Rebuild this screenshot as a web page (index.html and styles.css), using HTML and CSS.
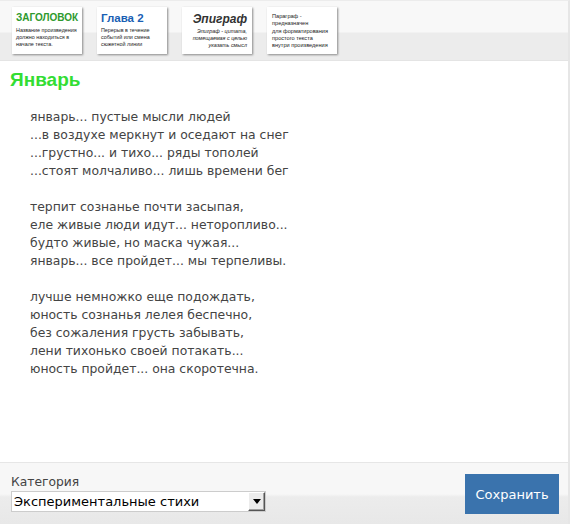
FILE: index.html
```html
<!DOCTYPE html>
<html lang="ru">
<head>
<meta charset="utf-8">
<link rel="stylesheet" href="styles.css">
</head>
<body>
<div class="page">
  <div class="toolbar">
    <div class="tpl tpl-h">
      <div class="tpl-title green">ЗАГОЛОВОК</div>
      <div class="tpl-text">Название произведения должно находиться в начале текста.</div>
    </div>
    <div class="tpl tpl-h">
      <div class="tpl-title blue">Глава 2</div>
      <div class="tpl-text">Перерыв в течение событий или смена сюжетной линии</div>
    </div>
    <div class="tpl tpl-e">
      <div class="tpl-title epi">Эпиграф</div>
      <div class="tpl-text epi-text">Эпиграф - цитата,<br>помещаемая с целью<br>указать смысл</div>
    </div>
    <div class="tpl tpl-p">
      <div class="tpl-text para">Параграф -<br>предназначен<br>для форматирования<br>простого текста<br>внутри произведения</div>
    </div>
  </div>
  <div class="content">
    <h1 class="title">Январь</h1>
    <div class="poem">
      <p>январь... пустые мысли людей<br>...в воздухе меркнут и оседают на снег<br>...грустно... и тихо... ряды тополей<br>...стоят молчаливо... лишь времени бег</p>
      <p>терпит сознанье почти засыпая,<br>еле живые люди идут... неторопливо...<br>будто живые, но маска чужая...<br>январь... все пройдет... мы терпеливы.</p>
      <p>лучше немножко еще подождать,<br>юность сознанья лелея беспечно,<br>без сожаления грусть забывать,<br>лени тихонько своей потакать...<br>юность пройдет... она скоротечна.</p>
    </div>
  </div>
  <div class="footer">
    <div class="cat">
      <div class="cat-label">Категория</div>
      <div class="select">
        <span class="select-value">Экспериментальные стихи</span>
        <span class="select-btn"><svg width="8" height="5" viewBox="0 0 8 5"><path d="M0 0H8L4 5Z" fill="#000"/></svg></span>
      </div>
    </div>
    <div class="save">Сохранить</div>
  </div>
</div>
</body>
</html>
```
FILE: styles.css
```css
* { box-sizing: border-box; }
html, body { margin: 0; padding: 0; background: #fff; }
.page {
  width: 570px;
  height: 524px;
  display: flex;
  flex-direction: column;
  border-right: 2px solid #e6e6e6;
  border-top: 1px solid #ececec;
  font-family: "DejaVu Sans", Verdana, sans-serif;
}
.toolbar {
  height: 60px;
  flex: none;
  display: flex;
  gap: 15px;
  padding: 6px 0 0 12px;
  background: linear-gradient(#f8f8f8 0, #f8f8f8 31px, #ececec 32px, #ececec 100%);
  border-bottom: 1px solid #e4e4e4;
}
.tpl {
  width: 70px;
  height: 47px;
  background: #fff;
  box-shadow: 1px 1px 2px #8a8a8a;
  padding: 5px 2px 0 4px;
  overflow: hidden;
  flex: none;
}
.tpl-title {
  font-family: "Liberation Sans", Arial, sans-serif;
  font-weight: bold;
  font-size: 10px;
  line-height: 12px;
  margin-bottom: 3px;
  white-space: nowrap;
}
.green { color: #2e9a2e; }
.blue { color: #1a5fb4; font-size: 11.5px; }
.tpl-text {
  font-family: "Liberation Sans", Arial, sans-serif;
  font-size: 5.4px;
  line-height: 7px;
  color: #222;
}
.tpl-e { text-align: right; padding-right: 5px; }
.epi {
  font-style: italic;
  color: #333;
  font-size: 12px;
  margin-top: 1px;
}
.epi-text { font-style: italic; }
.tpl-p { padding-top: 6px; padding-left: 5px; }
.para { line-height: 7.3px; font-size: 5.6px; }
.content {
  flex: 1;
  background: #fff;
  padding: 8px 10px 0 10px;
}
.title {
  margin: 0;
  font-family: "Liberation Sans", Arial, sans-serif;
  font-size: 19px;
  line-height: 22px;
  font-weight: bold;
  color: #33dd33;
}
.poem {
  margin-top: 17px;
  padding-left: 20px;
  font-size: 12.4px;
  line-height: 18px;
  color: #444;
}
.poem p { margin: 0 0 18px 0; }
.footer {
  height: 62px;
  flex: none;
  display: flex;
  justify-content: space-between;
  align-items: flex-start;
  padding: 11px 10px 0 11px;
  background: linear-gradient(#f7f7f7 0, #f7f7f7 31px, #ececec 34px, #e8e8e8 100%);
  border-top: 1px solid #e6e6e6;
}
.cat-label {
  font-size: 12.3px;
  line-height: 16px;
  color: #444;
  margin-bottom: 1px;
}
.select {
  width: 255px;
  height: 21px;
  background: #fff;
  border: 1px solid #ccc;
  display: flex;
  align-items: center;
  justify-content: space-between;
  padding-left: 2px;
}
.select-value {
  font-size: 13px;
  color: #000;
}
.select-btn {
  width: 17px;
  height: 19px;
  background: #ececec;
  border-top: 1px solid #fff;
  border-left: 1px solid #fff;
  border-right: 1px solid #555;
  border-bottom: 1px solid #555;
  box-shadow: inset -1px -1px 0 #a0a0a0;
  display: flex;
  align-items: center;
  justify-content: center;
}
.save {
  width: 94px;
  height: 40px;
  background: #3a73ad;
  color: #fff;
  font-size: 13px;
  display: flex;
  align-items: center;
  justify-content: center;
  margin-right: -1px;
}
```
